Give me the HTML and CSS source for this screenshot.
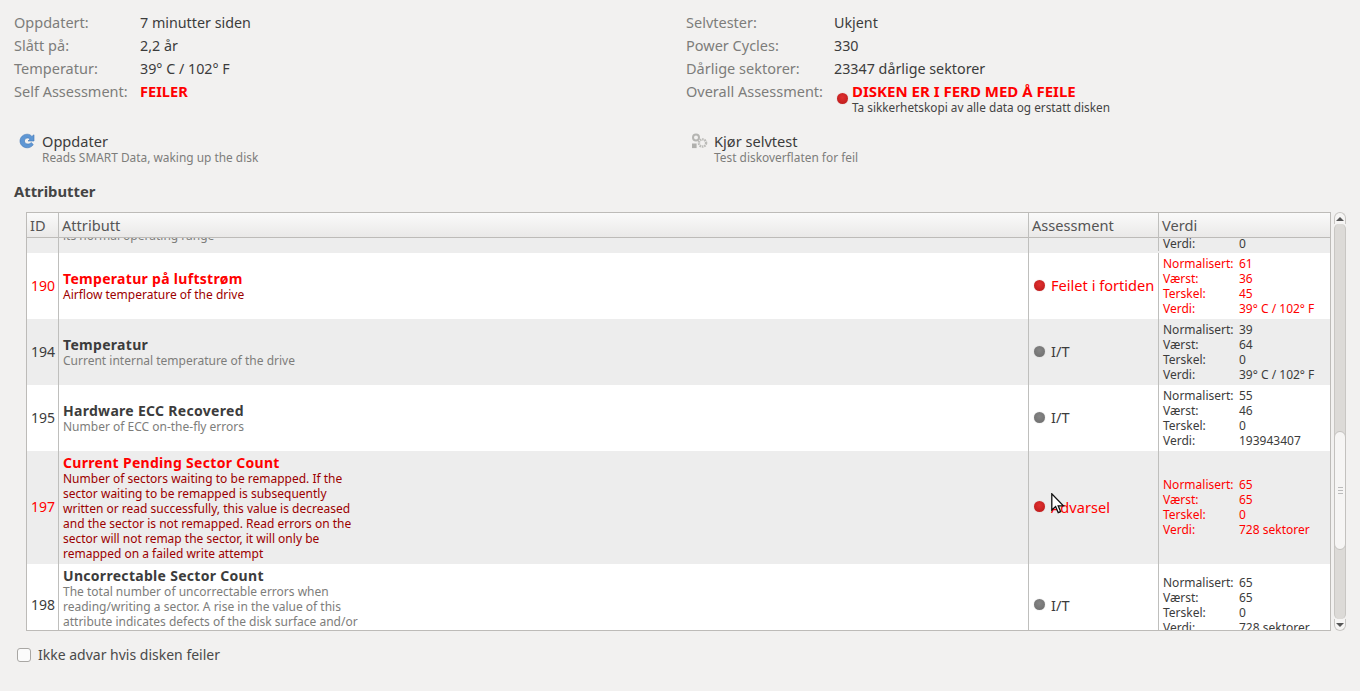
FILE: index.html
```html
<!DOCTYPE html>
<html lang="no">
<head>
<meta charset="utf-8">
<title>Attributter</title>
<link rel="stylesheet" href="styles.css">
</head>
<body>
<div class="page">
  <section class="summary">
    <dl class="facts">
      <dt>Oppdatert:</dt><dd>7 minutter siden</dd>
      <dt>Slått på:</dt><dd>2,2 år</dd>
      <dt>Temperatur:</dt><dd>39° C / 102° F</dd>
      <dt>Self Assessment:</dt><dd class="fail">FEILER</dd>
    </dl>
    <dl class="facts facts-right">
      <dt>Selvtester:</dt><dd>Ukjent</dd>
      <dt>Power Cycles:</dt><dd>330</dd>
      <dt>Dårlige sektorer:</dt><dd>23347 dårlige sektorer</dd>
      <dt>Overall Assessment:</dt>
      <dd class="overall">
        <span class="dot dot-red dot-overall"></span>
        <span class="overall-text"><b>DISKEN ER I FERD MED Å FEILE</b><small>Ta sikkerhetskopi av alle data og erstatt disken</small></span>
      </dd>
    </dl>
  </section>
  <section class="actions">
    <div class="action">
      <svg class="action-icon" width="16" height="16" viewBox="0 0 16 16"><path d="M15 1.8 V8 H9 L11.1 6 C10.4 5.3 9.6 5 8.8 5 C6.9 5 5.4 6.3 5.4 8 C5.4 9.7 6.9 11 8.8 11 C10.2 11 11.3 10.5 12.2 9.5 L14.3 11.6 C13 13.5 10.9 14.8 8.3 14.8 C4.2 14.8 1 11.8 1 8 C1 4.2 4.2 1.2 8.3 1.2 C10 1.2 11.6 1.9 12.9 3.4 Z" fill="#5f97d4" stroke="#3f76b5" stroke-width=".6"/></svg>
      <div><div class="action-title">Oppdater</div><div class="action-sub">Reads SMART Data, waking up the disk</div></div>
    </div>
    <div class="action action-right">
      <svg class="action-icon" width="18" height="18" viewBox="0 0 18 18"><circle cx="5" cy="4.5" r="3" fill="none" stroke="#b5b5b2" stroke-width="2"/><circle cx="11.5" cy="10" r="3.6" fill="none" stroke="#bcbcb9" stroke-width="2.4" stroke-dasharray="1.6 .7"/><rect x="1" y="10.5" width="4.6" height="4.6" fill="#b0b0ad"/></svg>
      <div><div class="action-title">Kjør selvtest</div><div class="action-sub">Test diskoverflaten for feil</div></div>
    </div>
  </section>
  <h2 class="heading">Attributter</h2>
  <div class="table-wrap">
    <div class="table">
      <div class="row head"><div>ID</div><div>Attributt</div><div>Assessment</div><div>Verdi</div></div>
      <div class="rows">
        <div class="row partial alt">
          <div></div>
          <div class="attr"><div class="desc">its normal operating range</div></div>
          <div></div>
          <div class="vals"><span>Verdi:</span><span>0</span></div>
        </div>
        <div class="row bad r66">
          <div class="id">190</div>
          <div class="attr"><div class="name">Temperatur på luftstrøm</div><div class="desc">Airflow temperature of the drive</div></div>
          <div class="state"><span class="dot dot-red"></span>Feilet i fortiden</div>
          <div class="vals"><span>Normalisert:</span><span>61</span><span>Værst:</span><span>36</span><span>Terskel:</span><span>45</span><span>Verdi:</span><span>39° C / 102° F</span></div>
        </div>
        <div class="row alt r66">
          <div class="id">194</div>
          <div class="attr"><div class="name">Temperatur</div><div class="desc">Current internal temperature of the drive</div></div>
          <div class="state"><span class="dot dot-grey"></span>I/T</div>
          <div class="vals"><span>Normalisert:</span><span>39</span><span>Værst:</span><span>64</span><span>Terskel:</span><span>0</span><span>Verdi:</span><span>39° C / 102° F</span></div>
        </div>
        <div class="row r66">
          <div class="id">195</div>
          <div class="attr"><div class="name">Hardware ECC Recovered</div><div class="desc">Number of ECC on-the-fly errors</div></div>
          <div class="state"><span class="dot dot-grey"></span>I/T</div>
          <div class="vals"><span>Normalisert:</span><span>55</span><span>Værst:</span><span>46</span><span>Terskel:</span><span>0</span><span>Verdi:</span><span>193943407</span></div>
        </div>
        <div class="row alt bad r113">
          <div class="id">197</div>
          <div class="attr"><div class="name">Current Pending Sector Count</div><div class="desc">Number of sectors waiting to be remapped. If the<br>sector waiting to be remapped is subsequently<br>written or read successfully, this value is decreased<br>and the sector is not remapped. Read errors on the<br>sector will not remap the sector, it will only be<br>remapped on a failed write attempt</div></div>
          <div class="state"><span class="dot dot-red"></span>Advarsel</div>
          <div class="vals"><span>Normalisert:</span><span>65</span><span>Værst:</span><span>65</span><span>Terskel:</span><span>0</span><span>Verdi:</span><span>728 sektorer</span></div>
        </div>
        <div class="row r83">
          <div class="id">198</div>
          <div class="attr"><div class="name">Uncorrectable Sector Count</div><div class="desc">The total number of uncorrectable errors when<br>reading/writing a sector. A rise in the value of this<br>attribute indicates defects of the disk surface and/or</div></div>
          <div class="state"><span class="dot dot-grey"></span>I/T</div>
          <div class="vals"><span>Normalisert:</span><span>65</span><span>Værst:</span><span>65</span><span>Terskel:</span><span>0</span><span>Verdi:</span><span>728 sektorer</span></div>
        </div>
      </div>
    </div>
    <div class="scrollbar">
      <div class="sb-btn"><span class="arrow-up"></span></div>
      <div class="sb-track"><div class="sb-thumb"><span class="grip"></span></div></div>
      <div class="sb-btn"><span class="arrow-down"></span></div>
    </div>
  </div>
  <label class="check"><span class="box"></span>Ikke advar hvis disken feiler</label>
</div>
<svg class="cursor" width="14" height="22" viewBox="0 0 14 22"><path d="M.8 .8 V17 L4.6 13.6 L7.2 19.6 L9.6 18.6 L7.2 12.8 H12.4 Z" fill="#fff" stroke="#111" stroke-width="1.3"/></svg>
</body>
</html>
```
FILE: styles.css
```css
* { box-sizing: border-box; }
html, body { margin: 0; height: 100%; }
body {
  background: #f2f1f0;
  color: #3c3c3c;
  font-family: "Noto Sans", "DejaVu Sans", sans-serif;
  font-size: 14.3px;
  overflow: hidden;
  position: relative;
}
.page { padding: 12px 14px 0; }

.summary { display: grid; grid-template-columns: 672px 1fr; height: 119px; }
.facts {
  display: grid;
  grid-template-columns: 126px 1fr;
  grid-auto-rows: 23px;
  margin: 0;
  line-height: 22px;
}
.facts-right { grid-template-columns: 148px 1fr; }
.facts dt { color: #7d7d7b; white-space: nowrap; font-size: 14.5px; line-height: 21px; }
.facts dd { margin: 0; color: #3c3c3c; }
.facts .fail { color: #f00; font-weight: 700; font-size: 14.6px; line-height: 21px; }
.overall { display: flex; align-items: flex-start; padding-left: 3px; }
.overall-text { display: flex; flex-direction: column; margin-left: 4px; }
.overall-text b { color: #f00; font-size: 15px; line-height: 16px; margin-top: 2px; white-space: nowrap; }
.overall-text small { font-size: 11.8px; line-height: 16px; white-space: nowrap; color: #444; }

.actions { display: grid; grid-template-columns: 672px 1fr; height: 50px; }
.action { display: flex; gap: 7px; padding-left: 5px; }
.action-right { padding-left: 5px; gap: 5px; }
.action-icon { flex: none; margin-top: 2px; }
.action-title { font-size: 14.6px; line-height: 20px; }
.action-sub { font-size: 11.9px; line-height: 12px; color: #7d7d7b; }

.heading { margin: 0; font-size: 14.8px; font-weight: 700; line-height: 20px; height: 31px; color: #444; }

.table-wrap { display: flex; gap: 3px; margin-left: 12px; height: 419px; }
.table { width: 1305px; border: 1px solid #bdbbb8; background: #fff; display: flex; flex-direction: column; overflow: hidden; }
.row { display: grid; grid-template-columns: 31px 970px 130px 1fr; }
.row > div { border-left: 1px solid #bfbfbd; min-width: 0; }
.row > div:first-child { border-left: 0; }
.head {
  height: 25px;
  flex: none;
  background: linear-gradient(#fafafa, #eae9e8);
  border-bottom: 1px solid #bdbbb8;
  color: #555;
  font-size: 14.6px;
  line-height: 25px;
}
.head > div { padding-left: 3px; }
.rows { flex: 1; overflow: hidden; }
.alt { background: #ededed; }
.partial { height: 15px; overflow: hidden; }
.partial .attr { display: block; }
.partial .attr .desc { transform: translateY(-10px); }
.partial .vals { align-content: start; transform: translateY(-2px); }
.r66 { height: 66px; }
.r113 { height: 113px; }
.r113 .vals { padding-bottom: 2px; }
.r83 { height: 83px; }
.r83 .vals { padding-bottom: 2px; }
.r83 .attr { justify-content: flex-start; padding-top: 4px; }
.id { display: flex; align-items: center; justify-content: flex-end; padding: 0 3px 2px 0; font-size: 14px; }
.attr { display: flex; flex-direction: column; justify-content: center; padding-left: 4px; }
.name { font-size: 14px; font-weight: 700; line-height: 16px; letter-spacing: .3px; }
.desc { font-size: 12px; line-height: 15px; color: #7d7d7b; white-space: nowrap; }
.state { display: flex; align-items: center; padding: 0 0 2px 5px; gap: 6px; font-size: 14.6px; white-space: nowrap; }
.vals { display: grid; grid-template-columns: 76px 1fr; grid-auto-rows: 15px; align-content: center; padding-left: 4px; font-size: 12px; line-height: 15px; }
.bad .id, .bad .name, .bad .state, .bad .vals { color: #f00; }
.bad .desc { color: #9c0000; }

.dot { display: inline-block; width: 11px; height: 11px; border-radius: 50%; flex: none; }
.dot-red { background: radial-gradient(circle at 50% 40%, #e03030, #b81818); box-shadow: 0 0 1px #c99; }
.dot-grey { background: radial-gradient(circle at 50% 40%, #858585, #6c6c6c); box-shadow: 0 0 1px #aaa; }
.dot-overall { margin-top: 12px; }

.scrollbar { width: 12px; display: flex; flex-direction: column; }
.sb-btn { height: 12px; background: #f6f5f4; border: 1px solid #c8c6c3; display: flex; align-items: center; justify-content: center; flex: none; }
.sb-btn:first-child { border-radius: 6px 6px 0 0; border-bottom: 0; }
.sb-btn:last-child { border-radius: 0 0 6px 6px; border-top: 0; }
.arrow-up { border: 4px solid transparent; border-top: 0; border-bottom: 4px solid #555; }
.arrow-down { border: 4px solid transparent; border-bottom: 0; border-top: 4px solid #555; }
.sb-track { flex: 1; background: #dcdad7; border-left: 1px solid #c8c6c3; border-right: 1px solid #c8c6c3; padding-top: 207px; border-radius: 5px; }
.sb-thumb { height: 119px; background: #f6f5f4; border: 1px solid #c3c1be; margin: 0 -1px; border-radius: 6px; display: flex; align-items: center; justify-content: center; }
.grip { width: 5px; height: 7px; background: repeating-linear-gradient(#bbb 0 1px, transparent 1px 3px); }

.check { display: flex; align-items: center; gap: 7px; margin: 14px 0 0 3px; font-size: 14px; color: #4a4a4a; line-height: 20px; }
.box { width: 14px; height: 14px; border: 1px solid #a9a7a4; border-radius: 3px; background: #fbfbfb; }

.cursor { position: absolute; left: 1051px; top: 493px; }
```
